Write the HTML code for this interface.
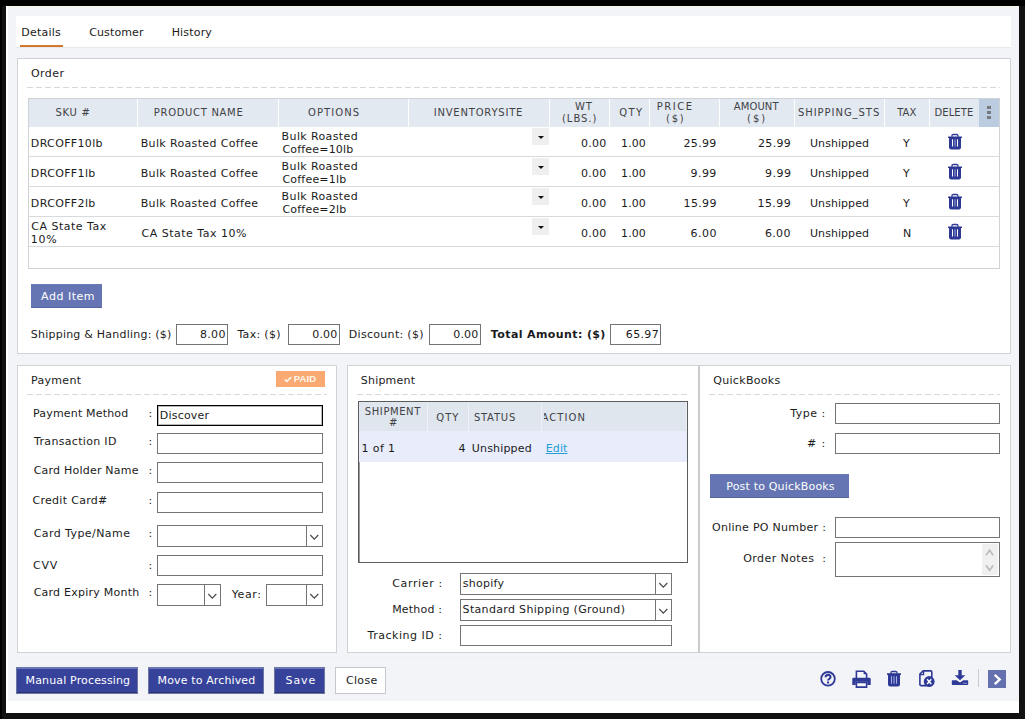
<!DOCTYPE html>
<html lang="en">
<head>
<meta charset="utf-8">
<title>Order Details</title>
<style>
*{box-sizing:border-box;margin:0;padding:0}
html,body{width:1025px;height:719px;overflow:hidden;background:#111}
body{position:relative;font-family:"DejaVu Sans","Liberation Sans",sans-serif;font-size:11px;color:#1b1b1b;line-height:14px}
div,span,i,b,u,svg{position:absolute}
#frame{left:6px;top:6px;width:1013px;height:707px;background:#fff}
#gray{left:8px;top:7px;width:1011px;height:694px;background:#f2f4f7}
#bt{left:0;top:0;width:1025px;height:6px;background:#000}
#bl{left:0;top:0;width:2px;height:719px;background:#000}
#tabs{left:16px;top:16px;width:995px;height:31px;background:#fff}
#tabline{left:20px;top:45px;width:43px;height:2px;background:#d2782f}
.panel{background:#fff;border:1px solid #d0d3d6}
.dash{height:1px;background:repeating-linear-gradient(90deg,#d6d8da 0,#d6d8da 6px,transparent 6px,transparent 9px)}
.t{white-space:nowrap;line-height:14px;font-style:normal;font-weight:normal}
.h{font-size:10px;color:#3f4245}
.w{color:#fff}
.bold{font-weight:bold}
.box{background:#fff;border:1px solid #747474}
.hd{top:0;height:28px;background:#e3e9f0;border-right:1px solid #fdfdfe}
.rowline{left:0;width:970px;height:1px;background:#d8dbde}
.dd{width:17px;height:17px;background:#efeff0}
.dd:after{content:"";position:absolute;left:6px;top:8px;border:3px solid transparent;border-top:3.5px solid #111;border-bottom:0}
.lt{background:#6575b3;box-shadow:inset 0 -1px 0 #56639f,inset 0 1px 0 #6b7bb8}
.dk{background:#37439b;border:1px solid #6f769f;box-shadow:inset 0 1px 0 #6577c2,inset 0 -1px 0 #2b3377}
.sel{background:#fff;border:1px solid #747474}
.sel i{right:0;top:0;bottom:0;width:16px;border-left:1px solid #747474}

.dots,.dots:before,.dots:after{width:4px;height:3px;background:#777b80;content:"";position:absolute}
.dots{left:8px;top:12px}
.dots:before{left:0;top:-5px}
.dots:after{left:0;top:5px}
.paid{background:#f9a971}
.chev{left:4px;width:6px;height:6px;border-left:1.5px solid #c2c2c2;border-top:1.5px solid #c2c2c2;transform:rotate(45deg)}
.chev.dn{transform:rotate(225deg)}
svg{overflow:visible}
</style>
</head>
<body>
<div id="bt"></div><div id="bl"></div><div style="left:8px;top:6px;width:1011px;height:1px;background:#fdf6e3;z-index:1"></div><div id="frame"></div><div id="gray"></div><div id="tabs"></div><div id="tabline"></div>
<div style="left:16px;top:47px;width:995px;height:1px;background:#e6e8ea"></div>
<span id="tab1" class="t " style="left:21.20px;top:26.00px;letter-spacing:0.252px;">Details</span>
<span id="tab2" class="t " style="left:89.22px;top:26.00px;letter-spacing:0.122px;">Customer</span>
<span id="tab3" class="t " style="left:171.64px;top:26.00px;letter-spacing:0.187px;">History</span>
<div class="panel" style="left:17px;top:58px;width:994px;height:296px"></div>
<span id="ot" class="t " style="left:30.89px;top:66.80px;letter-spacing:0.462px;">Order</span>
<div class="dash" style="left:27px;top:87px;width:973px"></div>
<div id="tbl" style="left:28px;top:98px;width:972px;height:171px;border:1px solid #d0d3d6;background:#fff">
<div class="hd" style="left:0px;width:109px"></div>
<div class="hd" style="left:109px;width:141px"></div>
<div class="hd" style="left:250px;width:130px"></div>
<div class="hd" style="left:380px;width:141px"></div>
<div class="hd" style="left:521px;width:60px"></div>
<div class="hd" style="left:581px;width:40px"></div>
<div class="hd" style="left:621px;width:70px"></div>
<div class="hd" style="left:691px;width:75px"></div>
<div class="hd" style="left:766px;width:90px"></div>
<div class="hd" style="left:856px;width:45px"></div>
<div class="hd" style="left:901px;width:49px;border-right:0"></div>
<div class="hd" style="left:950px;width:20px;background:#bccce0;border-right:0"><b class="dots"></b></div>
<div class="rowline" style="top:57px"></div>
<div class="rowline" style="top:87px"></div>
<div class="rowline" style="top:117px"></div>
<div class="rowline" style="top:147px"></div>
</div>
<span id="h1" class="t h" style="left:55.41px;top:105.90px;letter-spacing:0.729px;">SKU #</span>
<span id="h2" class="t h" style="left:153.84px;top:105.90px;letter-spacing:0.679px;">PRODUCT NAME</span>
<span id="h3" class="t h" style="left:308.05px;top:105.90px;letter-spacing:1.080px;">OPTIONS</span>
<span id="h4" class="t h" style="left:433.71px;top:105.90px;letter-spacing:0.793px;">INVENTORYSITE</span>
<span id="h5a" class="t h" style="left:574.95px;top:99.90px;letter-spacing:0.803px;">WT</span>
<span id="h5b" class="t h" style="left:562.02px;top:111.90px;letter-spacing:0.949px;">(LBS.)</span>
<span id="h6" class="t h" style="left:619.34px;top:106.20px;letter-spacing:1.349px;">QTY</span>
<span id="h7a" class="t h" style="left:656.77px;top:99.90px;letter-spacing:1.489px;">PRICE</span>
<span id="h7b" class="t h" style="left:666.10px;top:111.90px;letter-spacing:1.644px;">($)</span>
<span id="h8a" class="t h" style="left:733.81px;top:99.90px;letter-spacing:0.094px;">AMOUNT</span>
<span id="h8b" class="t h" style="left:747.04px;top:111.90px;letter-spacing:1.974px;">($)</span>
<span id="h9" class="t h" style="left:797.92px;top:105.90px;letter-spacing:0.952px;">SHIPPING_STS</span>
<span id="h10" class="t h" style="left:897.13px;top:105.90px;letter-spacing:0.044px;">TAX</span>
<span id="h11" class="t h" style="left:934.47px;top:105.90px;letter-spacing:0.085px;">DELETE</span>
<span id="r1sku" class="t " style="left:30.85px;top:137.30px;letter-spacing:0.347px;">DRCOFF10lb</span>
<span id="r1name" class="t " style="left:140.70px;top:137.30px;letter-spacing:0.356px;">Bulk Roasted Coffee</span>
<span id="r1opta" class="t " style="left:281.62px;top:130.30px;letter-spacing:0.378px;">Bulk Roasted</span>
<span id="r1optb" class="t " style="left:282.46px;top:143.10px;letter-spacing:0.186px;">Coffee=10lb</span>
<i class="dd" style="left:532px;top:128px"></i>
<span id="r1wt" class="t " style="left:581.02px;top:137.30px;letter-spacing:0.262px;">0.00</span>
<span id="r1qty" class="t " style="left:621.10px;top:137.30px;letter-spacing:0.079px;">1.00</span>
<span id="r1pr" class="t " style="left:683.54px;top:137.30px;letter-spacing:0.336px;">25.99</span>
<span id="r1am" class="t " style="left:758.08px;top:137.30px;letter-spacing:0.279px;">25.99</span>
<span id="r1st" class="t " style="left:810.00px;top:137.30px;letter-spacing:0.057px;">Unshipped</span>
<span id="r1tax" class="t " style="left:903.12px;top:137.30px;letter-spacing:0.250px;">Y</span>
<svg viewBox="0 0 14 16" width="14" height="16" style="left:948px;top:134.1px"><path d="M4 2.8V1.7Q4 .5 5.3.5h3.4Q10 .5 10 1.7v1.1" fill="none" stroke="#2f3a96" stroke-width="1.3"/><rect x="0" y="2.4" width="14" height="1.5" rx=".5" fill="#2b3590"/><path fill="#2f3a96" d="M1 3.9h12v9.7q0 1.8-1.8 1.8H2.8Q1 15.400 1 13.600z"/><path stroke="#fff" stroke-width="1" d="M4.500 5.300v7.200M9.500 5.300v7.200" fill="none"/><path stroke="#9fa8e0" stroke-width="1" d="M7 5.300v7.200" fill="none"/></svg>
<span id="r2sku" class="t " style="left:30.85px;top:167.30px;letter-spacing:0.359px;">DRCOFF1lb</span>
<span id="r2name" class="t " style="left:140.70px;top:167.30px;letter-spacing:0.356px;">Bulk Roasted Coffee</span>
<span id="r2opta" class="t " style="left:281.62px;top:160.30px;letter-spacing:0.378px;">Bulk Roasted</span>
<span id="r2optb" class="t " style="left:282.46px;top:173.10px;letter-spacing:0.204px;">Coffee=1lb</span>
<i class="dd" style="left:532px;top:158px"></i>
<span id="r2wt" class="t " style="left:581.02px;top:167.30px;letter-spacing:0.262px;">0.00</span>
<span id="r2qty" class="t " style="left:621.10px;top:167.30px;letter-spacing:0.079px;">1.00</span>
<span id="r2pr" class="t " style="left:690.56px;top:167.30px;letter-spacing:0.432px;">9.99</span>
<span id="r2am" class="t " style="left:765.12px;top:167.30px;letter-spacing:0.457px;">9.99</span>
<span id="r2st" class="t " style="left:810.00px;top:167.30px;letter-spacing:0.057px;">Unshipped</span>
<span id="r2tax" class="t " style="left:903.12px;top:167.30px;letter-spacing:0.250px;">Y</span>
<svg viewBox="0 0 14 16" width="14" height="16" style="left:948px;top:164.1px"><path d="M4 2.8V1.7Q4 .5 5.3.5h3.4Q10 .5 10 1.7v1.1" fill="none" stroke="#2f3a96" stroke-width="1.3"/><rect x="0" y="2.4" width="14" height="1.5" rx=".5" fill="#2b3590"/><path fill="#2f3a96" d="M1 3.9h12v9.7q0 1.8-1.8 1.8H2.8Q1 15.400 1 13.600z"/><path stroke="#fff" stroke-width="1" d="M4.500 5.300v7.200M9.500 5.300v7.200" fill="none"/><path stroke="#9fa8e0" stroke-width="1" d="M7 5.300v7.200" fill="none"/></svg>
<span id="r3sku" class="t " style="left:30.85px;top:197.30px;letter-spacing:0.359px;">DRCOFF2lb</span>
<span id="r3name" class="t " style="left:140.70px;top:197.30px;letter-spacing:0.356px;">Bulk Roasted Coffee</span>
<span id="r3opta" class="t " style="left:281.62px;top:190.30px;letter-spacing:0.378px;">Bulk Roasted</span>
<span id="r3optb" class="t " style="left:282.46px;top:203.10px;letter-spacing:0.204px;">Coffee=2lb</span>
<i class="dd" style="left:532px;top:188px"></i>
<span id="r3wt" class="t " style="left:581.02px;top:197.30px;letter-spacing:0.262px;">0.00</span>
<span id="r3qty" class="t " style="left:621.10px;top:197.30px;letter-spacing:0.079px;">1.00</span>
<span id="r3pr" class="t " style="left:683.55px;top:197.30px;letter-spacing:0.334px;">15.99</span>
<span id="r3am" class="t " style="left:757.52px;top:197.30px;letter-spacing:0.416px;">15.99</span>
<span id="r3st" class="t " style="left:810.00px;top:197.30px;letter-spacing:0.057px;">Unshipped</span>
<span id="r3tax" class="t " style="left:903.12px;top:197.30px;letter-spacing:0.250px;">Y</span>
<svg viewBox="0 0 14 16" width="14" height="16" style="left:948px;top:194.1px"><path d="M4 2.8V1.7Q4 .5 5.3.5h3.4Q10 .5 10 1.7v1.1" fill="none" stroke="#2f3a96" stroke-width="1.3"/><rect x="0" y="2.4" width="14" height="1.5" rx=".5" fill="#2b3590"/><path fill="#2f3a96" d="M1 3.9h12v9.7q0 1.8-1.8 1.8H2.8Q1 15.400 1 13.600z"/><path stroke="#fff" stroke-width="1" d="M4.500 5.300v7.200M9.500 5.300v7.200" fill="none"/><path stroke="#9fa8e0" stroke-width="1" d="M7 5.300v7.200" fill="none"/></svg>
<span id="r4skua" class="t " style="left:31.26px;top:220.30px;letter-spacing:0.504px;">CA State Tax</span>
<span id="r4skub" class="t " style="left:30.66px;top:233.00px;letter-spacing:0.854px;">10%</span>
<span id="r4name" class="t " style="left:141.44px;top:227.30px;letter-spacing:0.510px;">CA State Tax 10%</span>
<i class="dd" style="left:532px;top:218px"></i>
<span id="r4wt" class="t " style="left:581.02px;top:227.30px;letter-spacing:0.262px;">0.00</span>
<span id="r4qty" class="t " style="left:621.10px;top:227.30px;letter-spacing:0.079px;">1.00</span>
<span id="r4pr" class="t " style="left:690.55px;top:227.30px;letter-spacing:0.460px;">6.00</span>
<span id="r4am" class="t " style="left:765.06px;top:227.30px;letter-spacing:0.282px;">6.00</span>
<span id="r4st" class="t " style="left:810.00px;top:227.30px;letter-spacing:0.057px;">Unshipped</span>
<span id="r4tax" class="t " style="left:902.89px;top:227.30px;letter-spacing:0.250px;">N</span>
<svg viewBox="0 0 14 16" width="14" height="16" style="left:948px;top:224.1px"><path d="M4 2.8V1.7Q4 .5 5.3.5h3.4Q10 .5 10 1.7v1.1" fill="none" stroke="#2f3a96" stroke-width="1.3"/><rect x="0" y="2.4" width="14" height="1.5" rx=".5" fill="#2b3590"/><path fill="#2f3a96" d="M1 3.9h12v9.7q0 1.8-1.8 1.8H2.8Q1 15.400 1 13.600z"/><path stroke="#fff" stroke-width="1" d="M4.500 5.300v7.200M9.500 5.300v7.200" fill="none"/><path stroke="#9fa8e0" stroke-width="1" d="M7 5.300v7.200" fill="none"/></svg>
<div class="lt" style="left:31px;top:284px;width:71px;height:24px"></div>
<span id="additem" class="t w" style="left:41.08px;top:290.00px;letter-spacing:0.524px;">Add Item</span>
<span id="sh" class="t " style="left:30.81px;top:328.00px;letter-spacing:0.225px;">Shipping &amp; Handling: ($)</span>
<div class="box" style="left:176px;top:324px;width:52px;height:21px"></div>
<span id="v1" class="t " style="left:200.06px;top:328.00px;letter-spacing:0.284px;">8.00</span>
<span id="tx" class="t " style="left:237.42px;top:328.00px;letter-spacing:0.307px;">Tax: ($)</span>
<div class="box" style="left:288px;top:324px;width:52px;height:21px"></div>
<span id="v2" class="t " style="left:312.28px;top:328.00px;letter-spacing:0.172px;">0.00</span>
<span id="dc" class="t " style="left:348.80px;top:328.00px;letter-spacing:0.300px;">Discount: ($)</span>
<div class="box" style="left:429px;top:324px;width:52px;height:21px"></div>
<span id="v3" class="t " style="left:453.28px;top:328.00px;letter-spacing:0.172px;">0.00</span>
<span id="ta" class="t bold" style="left:490.87px;top:328.00px;letter-spacing:0.391px;">Total Amount: ($)</span>
<div class="box" style="left:610px;top:324px;width:51px;height:21px"></div>
<span id="v4" class="t " style="left:625.86px;top:328.00px;letter-spacing:0.327px;">65.97</span>
<div class="panel" style="left:17px;top:365px;width:320px;height:288px"></div>
<span id="pt" class="t " style="left:31.03px;top:374.00px;letter-spacing:0.311px;">Payment</span>
<div class="dash" style="left:27px;top:394px;width:300px"></div>
<div class="paid" style="left:276px;top:371px;width:49px;height:16px"><svg viewBox="0 0 10 8" width="8" height="7" style="left:7.5px;top:4.5px"><path d="M1 3.8l2.5 2.5L9 1" fill="none" stroke="#fff7ee" stroke-width="2"/></svg></div>
<span id="paid" class="t bold" style="left:293.80px;top:372.00px;letter-spacing:0.092px;font-family:'Liberation Sans',sans-serif;font-size:9.5px;color:#fff7ee">PAID</span>
<span id="pl0" class="t " style="left:33.03px;top:406.75px;letter-spacing:0.178px;">Payment Method</span>
<span id="pc0" class="t " style="left:148.50px;top:406.75px;letter-spacing:0.250px;">:</span>
<div class="box" style="left:157px;top:405px;width:166px;height:21px;border-color:#000;box-shadow:inset 0 0 0 1px rgba(0,0,0,.28)"></div>
<span id="pl1" class="t " style="left:34.08px;top:434.75px;letter-spacing:0.319px;">Transaction ID</span>
<span id="pc1" class="t " style="left:148.50px;top:434.75px;letter-spacing:0.250px;">:</span>
<div class="box" style="left:157px;top:433px;width:166px;height:21px"></div>
<span id="pl2" class="t " style="left:33.65px;top:464.00px;letter-spacing:0.221px;">Card Holder Name</span>
<span id="pc2" class="t " style="left:148.50px;top:464.00px;letter-spacing:0.250px;">:</span>
<div class="box" style="left:157px;top:462px;width:166px;height:21px"></div>
<span id="pl3" class="t " style="left:32.45px;top:494.00px;letter-spacing:0.305px;">Credit Card#</span>
<span id="pc3" class="t " style="left:148.50px;top:494.00px;letter-spacing:0.250px;">:</span>
<div class="box" style="left:157px;top:492px;width:166px;height:21px"></div>
<span id="pl4" class="t " style="left:33.65px;top:527.25px;letter-spacing:0.432px;">Card Type/Name</span>
<span id="pc4" class="t " style="left:148.50px;top:527.25px;letter-spacing:0.250px;">:</span>
<div class="sel" style="left:157px;top:525px;width:166px;height:22px"><i><svg width="15" height="20" viewBox="0 0 15 20" style="left:0;top:0"><path d="M3.3 9l4 4.1 4-4.1" fill="none" stroke="#4a4a4a" stroke-width="1.2"/></svg></i></div>
<span id="pl5" class="t " style="left:33.06px;top:559.40px;letter-spacing:0.799px;">CVV</span>
<span id="pc5" class="t " style="left:148.50px;top:559.40px;letter-spacing:0.250px;">:</span>
<div class="box" style="left:157px;top:555px;width:166px;height:21px"></div>
<span id="pl6" class="t " style="left:33.65px;top:586.00px;letter-spacing:0.244px;">Card Expiry Month</span>
<span id="pc6" class="t " style="left:148.50px;top:586.00px;letter-spacing:0.250px;">:</span>
<div class="sel" style="left:157px;top:584px;width:64px;height:22px"><i><svg width="15" height="20" viewBox="0 0 15 20" style="left:0;top:0"><path d="M3.3 9l4 4.1 4-4.1" fill="none" stroke="#4a4a4a" stroke-width="1.2"/></svg></i></div>
<div class="sel" style="left:266px;top:584px;width:57px;height:22px"><i><svg width="15" height="20" viewBox="0 0 15 20" style="left:0;top:0"><path d="M3.3 9l4 4.1 4-4.1" fill="none" stroke="#4a4a4a" stroke-width="1.2"/></svg></i></div>
<span id="disc" class="t " style="left:159.83px;top:409.00px;letter-spacing:0.199px;">Discover</span>
<span id="yr" class="t " style="left:231.72px;top:587.50px;letter-spacing:0.596px;">Year:</span>
<div class="panel" style="left:347px;top:365px;width:352px;height:288px"></div>
<span id="st" class="t " style="left:360.85px;top:374.00px;letter-spacing:0.197px;">Shipment</span>
<div class="dash" style="left:357px;top:394px;width:332px"></div>
<div id="sgrid" style="left:358px;top:401px;width:330px;height:162px;border:1px solid #5c5c5c;box-shadow:inset 1px 0 0 #999;background:#fff">
<div class="hd" style="left:0px;width:69px;height:29px;background:#dfe6ee;border-right-color:#eef2f6"></div>
<div class="hd" style="left:69px;width:41px;height:29px;background:#dfe6ee;border-right-color:#eef2f6"></div>
<div class="hd" style="left:110px;width:73px;height:29px;background:#dfe6ee;border-right-color:#eef2f6"></div>
<div class="hd" style="left:183px;width:145px;height:29px;background:#dfe6ee;border-right-color:#eef2f6"></div>
<div style="left:0;top:29px;width:328px;height:31px;background:#e8ecfb"></div></div>
<span id="sh1" class="t h" style="left:364.87px;top:404.65px;letter-spacing:0.572px;">SHIPMENT</span>
<span id="sh1b" class="t h" style="left:389.09px;top:416.20px;letter-spacing:0.550px;">#</span>
<span id="sh2" class="t h" style="left:436.34px;top:410.50px;letter-spacing:0.986px;">QTY</span>
<span id="sh3" class="t h" style="left:473.92px;top:410.50px;letter-spacing:0.766px;">STATUS</span>
<div style="left:544px;top:404px;width:60px;height:26px;overflow:hidden">
<span id="sh4" class="t h" style="left:-2.6px;top:6.5px;letter-spacing:1.1px">ACTION</span></div>
<span id="s1" class="t " style="left:361.60px;top:442.25px;letter-spacing:0.379px;">1 of 1</span>
<span id="s2" class="t " style="left:458.43px;top:442.25px;letter-spacing:0.250px;">4</span>
<span id="s3" class="t " style="left:471.83px;top:442.25px;letter-spacing:0.163px;">Unshipped</span>
<span id="s4" class="t " style="left:545.80px;top:442.25px;letter-spacing:0.094px;color:#22a0d6;text-decoration:underline">Edit</span>
<span id="sl0" class="t " style="left:392.26px;top:576.80px;letter-spacing:0.630px;">Carrier :</span>
<div class="sel" style="left:460px;top:573px;width:212px;height:22px"><i><svg width="15" height="20" viewBox="0 0 15 20" style="left:0;top:0"><path d="M3.3 9l4 4.1 4-4.1" fill="none" stroke="#4a4a4a" stroke-width="1.2"/></svg></i></div>
<span id="sv0" class="t " style="left:462.67px;top:577.25px;letter-spacing:0.292px;">shopify</span>
<span id="sl1" class="t " style="left:392.17px;top:602.60px;letter-spacing:0.195px;">Method :</span>
<div class="sel" style="left:460px;top:599px;width:212px;height:22px"><i><svg width="15" height="20" viewBox="0 0 15 20" style="left:0;top:0"><path d="M3.3 9l4 4.1 4-4.1" fill="none" stroke="#4a4a4a" stroke-width="1.2"/></svg></i></div>
<span id="sv1" class="t " style="left:462.59px;top:603.00px;letter-spacing:0.332px;">Standard Shipping (Ground)</span>
<span id="sl2" class="t " style="left:367.62px;top:628.80px;letter-spacing:0.518px;">Tracking ID :</span>
<div class="box" style="left:460px;top:625px;width:212px;height:21px"></div>
<div class="panel" style="left:698px;top:365px;width:313px;height:288px;border-left:2px solid #c9cccf"></div>
<span id="qt" class="t " style="left:713.23px;top:374.00px;letter-spacing:0.317px;">QuickBooks</span>
<div class="dash" style="left:709px;top:394px;width:291px"></div>
<span id="ql0" class="t " style="left:790.13px;top:406.75px;letter-spacing:0.520px;">Type :</span>
<div class="box" style="left:835px;top:403px;width:165px;height:21px"></div>
<span id="ql1" class="t " style="left:806.95px;top:437.25px;letter-spacing:0.921px;"># :</span>
<div class="box" style="left:835px;top:433px;width:165px;height:21px"></div>
<span id="ql2" class="t " style="left:712.01px;top:520.50px;letter-spacing:0.278px;">Online PO Number :</span>
<div class="box" style="left:835px;top:517px;width:165px;height:21px"></div>
<span id="ql3" class="t " style="left:743.29px;top:552.25px;letter-spacing:0.419px;">Order Notes&nbsp; :</span>
<div class="box" style="left:835px;top:542px;width:165px;height:35px"><div style="right:1px;top:1px;width:16px;bottom:1px;background:#f0f0f0"><svg width="16" height="31" viewBox="0 0 16 31" style="left:0;top:0"><path d="M4 11.2L7.6 6.3l3.6 4.9M4 21.3l3.6 4.9 3.6-4.9" fill="none" stroke="#bdbdbd" stroke-width="1.8"/></svg></div></div>
<div class="lt" style="left:710px;top:474px;width:139px;height:24px"></div>
<span id="pq" class="t w" style="left:726.30px;top:480.25px;letter-spacing:0.177px;">Post to QuickBooks</span>
<div style="left:16px;top:663px;width:995px;height:1px;background:#f6f7f8"></div>
<div class="dk" style="left:16px;top:667px;width:122px;height:27px"></div>
<span id="b0" class="t w" style="left:25.62px;top:674.20px;letter-spacing:0.141px;">Manual Processing</span>
<div class="dk" style="left:148px;top:667px;width:116px;height:27px"></div>
<span id="b1" class="t w" style="left:157.62px;top:674.20px;letter-spacing:0.129px;">Move to Archived</span>
<div class="dk" style="left:274px;top:667px;width:51px;height:27px"></div>
<span id="b2" class="t w" style="left:285.55px;top:674.20px;letter-spacing:0.907px;">Save</span>
<div style="left:335px;top:667px;width:51px;height:27px;background:#fff;border:1px solid #c6c9cc"></div>
<span id="b3" class="t " style="left:346.03px;top:674.20px;letter-spacing:0.309px;">Close</span>
<div id="icons">
<svg id="ihelp" style="left:820px;top:671px" width="16" height="16" viewBox="0 0 16 16"><circle cx="8" cy="7.8" r="6.8" fill="none" stroke="#2f3a96" stroke-width="1.8"/><path d="M5.6 6.3q0-2.4 2.5-2.4t2.4 2.1q0 1.2-1.2 1.9t-1.2 1.7" fill="none" stroke="#2f3a96" stroke-width="2.1"/><rect x="7" y="10.500" width="2.100" height="2" fill="#2f3a96"/></svg>
<svg id="iprint" style="left:852px;top:670px" width="19" height="18" viewBox="0 0 19 18"><path d="M4.4 8.5V1.2h7.4l2.8 2.8v4.5" fill="#f6f7fa" stroke="#2f3a96" stroke-width="1.6"/><path d="M11.6 .6l3.6 3.6h-3.6z" fill="#2f3a96"/><path d="M1.6 7.8h15.8q1.3 0 1.3 1.3v5.9h-3.4v-3.2H3.7v3.2H.3V9.1q0-1.3 1.3-1.3z" fill="#2f3a96"/><path d="M4.4 12.4h10.2v4.700H4.4z" fill="#f6f7fa" stroke="#2f3a96" stroke-width="1.6"/></svg>
<svg id="itrash" style="left:887px;top:670.8px" width="14" height="16" viewBox="0 0 14 16"><path d="M4 2.8V1.7Q4 .5 5.3.5h3.4Q10 .5 10 1.7v1.1" fill="none" stroke="#2f3a96" stroke-width="1.3"/><rect x="0" y="2.3" width="14" height="1.700" rx=".5" fill="#2b3590"/><path fill="#2f3a96" d="M1 3.9h12v9.700q0 1.800-1.800 1.800H2.800Q1 15.400 1 13.600z"/><path stroke="#a9b1e4" stroke-width="1" d="M4.500 5.300v7.400M7 5.300v7.400M9.500 5.300v7.400" fill="none"/></svg>
<svg id="idoc" style="left:919px;top:670px" width="16" height="17" viewBox="0 0 16 17"><path d="M4.2 .9h7.6q1 0 1 1v12.7q0 1-1 1H1.9q-1 0-1-1V4.2z" fill="none" stroke="#2f3a96" stroke-width="1.6"/><path d="M4.6 .9v3.7H.9" fill="none" stroke="#2f3a96" stroke-width="1.3"/><circle cx="10.2" cy="11.5" r="5.4" fill="#2f3a96"/><path d="M8.1 9.3l4.2 4.6M12.3 9.3l-4.2 4.6" stroke="#fff" stroke-width="1.5" fill="none"/></svg>
<svg id="idown" style="left:951px;top:670px" width="18" height="16" viewBox="0 0 18 16"><path d="M7.3 0h3.4v5.2h3.6L9 10.2 3.7 5.2h3.6z" fill="#2f3a96"/><path d="M1.6 10.3h4L9 12.6l3.4-2.3h4q.8 0 .8.8v3.1q0 .8-.8.8H1.6q-.8 0-.8-.8v-3.1q0-.8.8-.8z" fill="#2f3a96"/><rect x="12.4" y="12.7" width="1.2" height="1.2" fill="#aeb4dc"/><rect x="14.4" y="12.7" width="1.2" height="1.2" fill="#aeb4dc"/></svg>
<div style="position:absolute;left:978px;top:669px;width:1px;height:18px;background:#c9cbcd"></div>
<div style="position:absolute;left:988px;top:670px;width:18px;height:18px;background:#6571ae"><svg style="left:0;top:0" width="18" height="18" viewBox="0 0 18 18"><path d="M6.7 4.9l5 4.6-5 4.6" fill="none" stroke="#fff" stroke-width="2.3"/></svg></div>
</div>

</body>
</html>
